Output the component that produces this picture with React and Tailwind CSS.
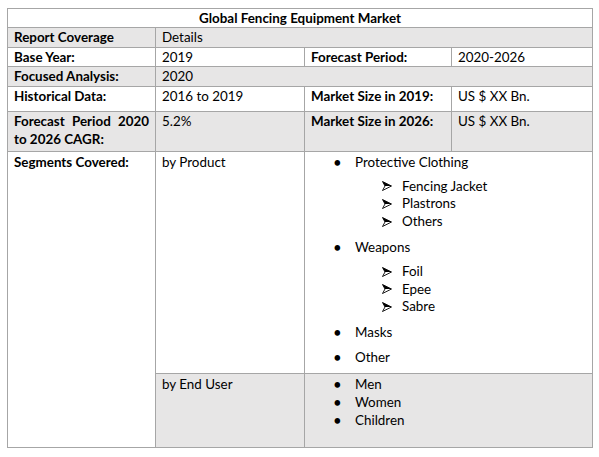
const shade = 'bg-[#e7e6e6]'

function Arrow() {
  return (
    <svg width="10" height="10" viewBox="0 0 10 10" className="shrink-0">
      <polygon points="0.5,0.5 9.5,5 3,5" fill="#000" />
      <polygon points="0.5,0.5 9.5,5 0.5,9.5 3,5" fill="none" stroke="#000" strokeWidth="0.9" strokeLinejoin="miter" />
    </svg>
  )
}

function Bullet({ children, className = '' }) {
  return (
    <li className={`flex items-center h-[17.6px] ${className}`}>
      <span className="w-[50px] pl-[28px] text-[15px]">•</span>
      <span>{children}</span>
    </li>
  )
}

function Sub({ items }) {
  return (
    <ul className="mt-[6px]">
      {items.map((item) => (
        <li key={item} className="flex items-center h-[17.6px]">
          <span className="w-[97px] pl-[77px] flex items-center">
            <Arrow />
          </span>
          <span>{item}</span>
        </li>
      ))}
    </ul>
  )
}

export default function App() {
  return (
    <div className="min-h-[457px] bg-white pt-[8px] pl-[7px] font-['Lato',sans-serif] text-[13.4px] leading-[17.6px] text-black">
      <div className="grid w-[586px] grid-cols-[147px_148px_146px_140px] grid-rows-[18px_19px_18px_19px_24px_39px_221px_73px] gap-px bg-[#a6a6a6] p-px">
        <div className="col-span-4 bg-white pt-px text-center font-bold">Global Fencing Equipment Market</div>

        <div className={`${shade} px-[6px] pt-px font-bold`}>Report Coverage</div>
        <div className={`${shade} col-span-3 px-[6px] pt-px`}>Details</div>

        <div className="bg-white px-[6px] pt-px font-bold">Base Year:</div>
        <div className="bg-white px-[6px] pt-px">2019</div>
        <div className="bg-white px-[6px] pt-px font-bold">Forecast Period:</div>
        <div className="bg-white px-[6px] pt-px">2020-2026</div>

        <div className={`${shade} px-[6px] pt-px font-bold`}>Focused Analysis:</div>
        <div className={`${shade} col-span-3 px-[6px] pt-px`}>2020</div>

        <div className="bg-white px-[6px] pt-px font-bold">Historical Data:</div>
        <div className="bg-white px-[6px] pt-px">2016 to 2019</div>
        <div className="bg-white px-[6px] pt-px font-bold">Market Size in 2019:</div>
        <div className="bg-white px-[6px] pt-px">US $ XX Bn.</div>

        <div className={`${shade} px-[6px] pt-px font-bold`}>
          <span className="block [text-align-last:justify]">Forecast Period 2020</span>
          <span className="block">to 2026 CAGR:</span>
        </div>
        <div className={`${shade} px-[6px] pt-px`}>5.2%</div>
        <div className={`${shade} px-[6px] pt-px font-bold`}>Market Size in 2026:</div>
        <div className={`${shade} px-[6px] pt-px`}>US $ XX Bn.</div>

        <div className="row-span-2 bg-white px-[6px] pt-[2px] font-bold">Segments Covered:</div>
        <div className="bg-white px-[6px] pt-[2px]">by Product</div>
        <div className="col-span-2 bg-white pt-[2px]">
          <ul>
            <Bullet>Protective Clothing</Bullet>
            <Sub items={['Fencing Jacket', 'Plastrons', 'Others']} />
            <Bullet className="mt-[9px]">Weapons</Bullet>
            <Sub items={['Foil', 'Epee', 'Sabre']} />
            <Bullet className="mt-[8px]">Masks</Bullet>
            <Bullet className="mt-[8px]">Other</Bullet>
          </ul>
        </div>

        <div className={`${shade} px-[6px] pt-[2px]`}>by End User</div>
        <div className={`${shade} col-span-2 pt-[2px]`}>
          <ul>
            <Bullet>Men</Bullet>
            <Bullet className="h-[18.4px]">Women</Bullet>
            <Bullet className="h-[18.4px]">Children</Bullet>
          </ul>
        </div>
      </div>
    </div>
  )
}
